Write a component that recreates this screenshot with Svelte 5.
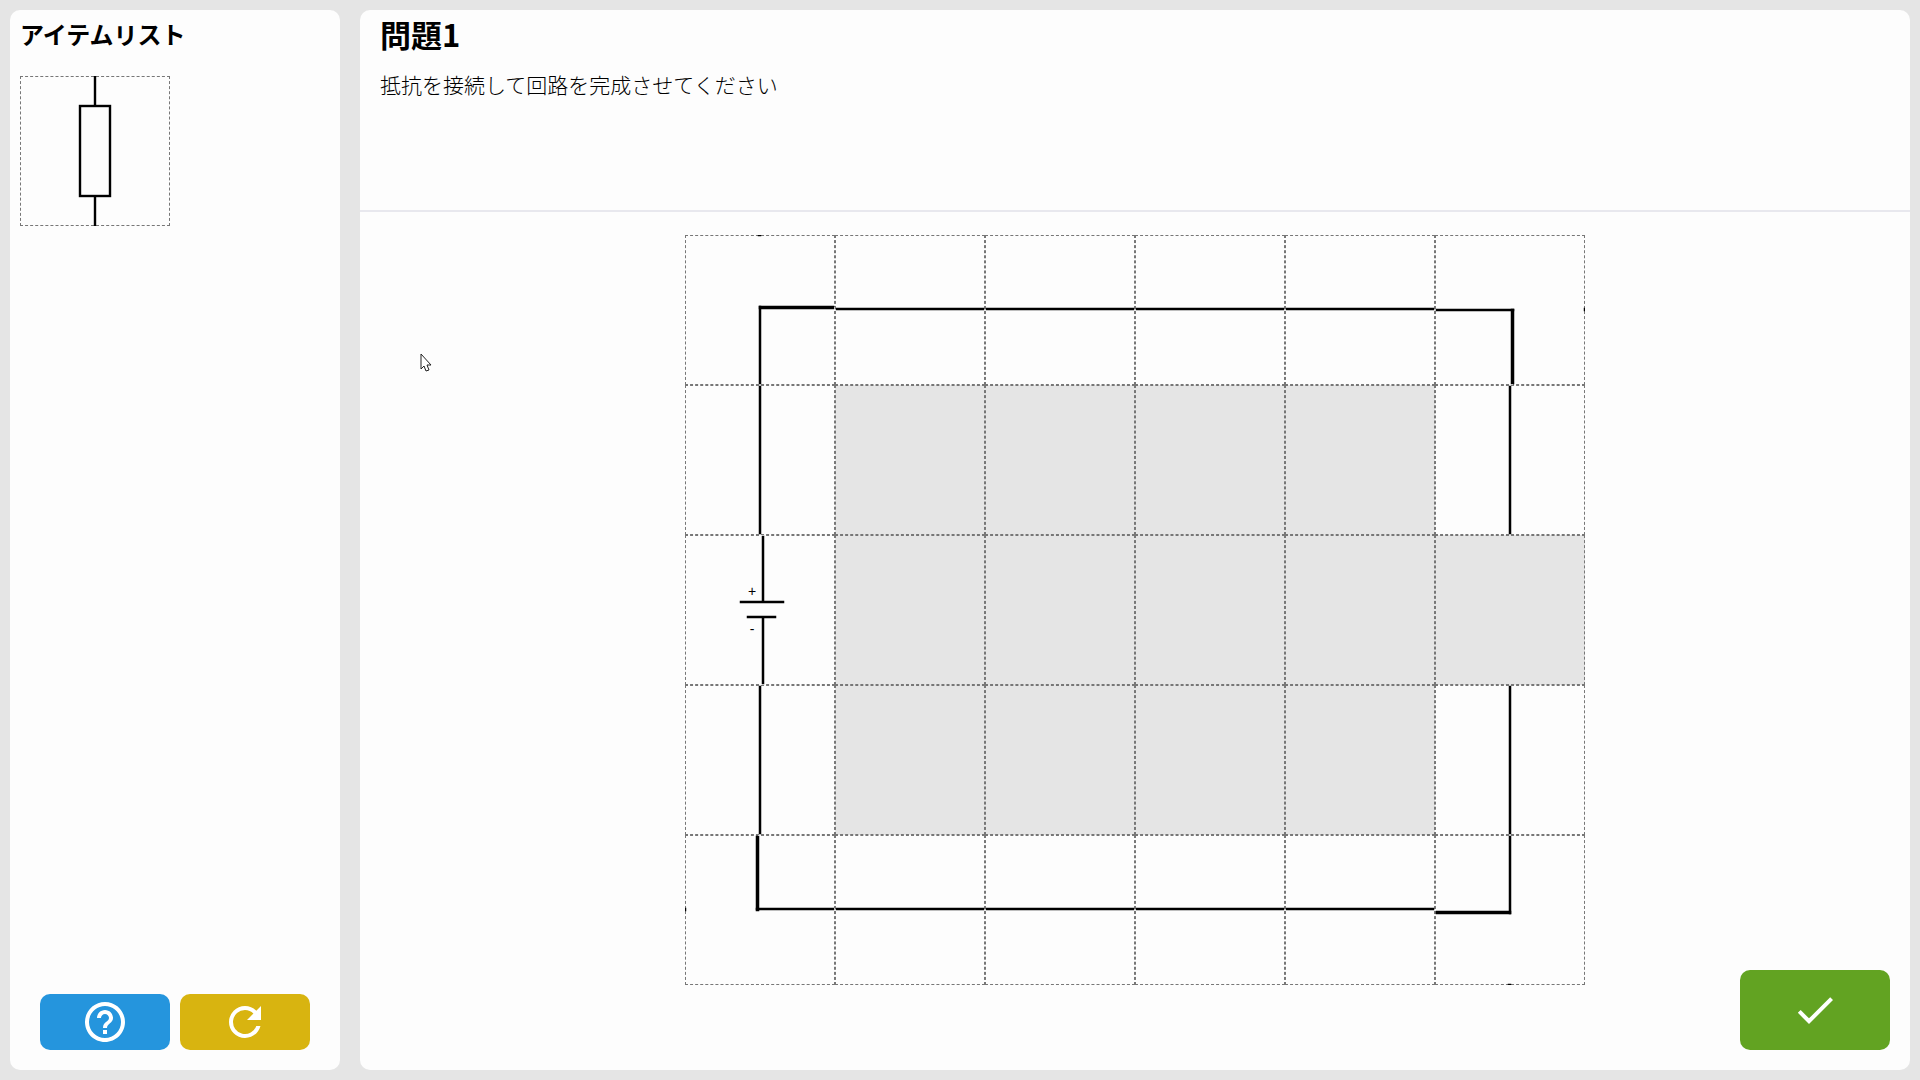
<script>
  // Wire strokes are [x, y, width, height] boxes inside a 150-unit cell.
  const parts = {
    tl: { wires: [[74, 71, 75, 3], [74, 71, 2, 78], [73, 0, 3, 1]], gaps: [[74, 149, 2, 1], [149, 72, 1, 2]] },
    top: { wires: [[1, 73, 148, 2]], gaps: [] },
    tr: { wires: [[1, 74, 78, 2], [76, 74, 3, 75], [149, 73, 1, 3]], gaps: [[0, 74, 1, 2], [75, 149, 3, 1]] },
    left: { wires: [[74, 1, 2, 148]], gaps: [[74, 0, 2, 1], [74, 149, 2, 1]] },
    right: { wires: [[74, 1, 2, 148]], gaps: [[74, 0, 2, 1]] },
    battery: {
      wires: [[77, 1, 2, 66], [55, 66, 44, 2], [62, 81, 29, 2], [77, 82, 2, 67]],
      gaps: [[76, 0, 3, 1], [76, 149, 3, 1]],
      poles: true
    },
    bl: { wires: [[71, 1, 3, 75], [71, 73, 78, 2], [0, 73, 1, 3]], gaps: [[73, 0, 3, 1], [149, 73, 1, 3]] },
    br: { wires: [[1, 76, 75, 3], [74, 1, 2, 78], [73, 149, 3, 1]], gaps: [[0, 74, 1, 2], [74, 0, 2, 1]] }
  };

  const board = [
    ['tl', 'top', 'top', 'top', 'top', 'tr'],
    ['left', 'open', 'open', 'open', 'open', 'right'],
    ['battery', 'open', 'open', 'open', 'open', 'open'],
    ['left', 'open', 'open', 'open', 'open', 'right'],
    ['bl', 'top', 'top', 'top', 'top', 'br']
  ].flat();
</script>

<div class="app">
  <aside class="panel sidebar">
    <h2>アイテムリスト</h2>
    <div class="cell item">
      <svg viewBox="0 0 150 150" role="img" aria-label="抵抗">
        <path d="M75 0V30M75 120V150" stroke="#000" stroke-width="2.4" />
        <rect x="60" y="30" width="30" height="90" fill="none" stroke="#000" stroke-width="2.4" />
      </svg>
    </div>
    <div class="tools">
      <button class="help" aria-label="ヘルプ">
        <svg class="icon" viewBox="0 0 24 24"><path d="M11 18h2v-2h-2v2zm1-16C6.48 2 2 6.48 2 12s4.48 10 10 10 10-4.48 10-10S17.52 2 12 2zm0 18c-4.41 0-8-3.59-8-8s3.59-8 8-8 8 3.59 8 8-3.59 8-8 8zm0-14c-2.21 0-4 1.79-4 4h2c0-1.1.9-2 2-2s2 .9 2 2c0 2-3 1.75-3 5h2c0-2.25 3-2.5 3-5 0-2.21-1.79-4-4-4z" /></svg>
      </button>
      <button class="reset" aria-label="リセット">
        <svg class="icon" viewBox="0 0 24 24"><path d="M17.65 6.35C16.2 4.9 14.21 4 12 4a8 8 0 1 0 0 16c3.73 0 6.84-2.55 7.73-6h-2.08A6 6 0 1 1 12 6c1.66 0 3.14.69 4.22 1.78L13 11h7V4z" /></svg>
      </button>
    </div>
  </aside>

  <main class="panel main">
    <header>
      <h1>問題1</h1>
      <p>抵抗を接続して回路を完成させてください</p>
    </header>
    <section class="work">
      <div class="board">
        {#each board as kind}
          <div class="cell" class:open={kind === 'open'}>
            {#if parts[kind]}
              <svg viewBox="0 0 150 150" aria-hidden="true">
                {#each parts[kind].gaps as [x, y, w, h]}
                  <rect {x} {y} width={w} height={h} fill="#fdfdfd" />
                {/each}
                {#each parts[kind].wires as [x, y, w, h]}
                  <rect class="wire" {x} {y} width={w} height={h} />
                {/each}
                {#if parts[kind].poles}
                  <text x="67" y="61">+</text>
                  <text x="67" y="99">-</text>
                {/if}
              </svg>
            {/if}
          </div>
        {/each}
      </div>
    </section>
    <footer>
      <button class="submit" aria-label="決定">
        <svg class="icon" viewBox="0 0 24 24"><path d="M9 16.17L4.83 12l-1.42 1.41L9 19 21 7l-1.41-1.41z" /></svg>
      </button>
    </footer>
  </main>

  <svg class="pointer" viewBox="0 0 13 20" aria-hidden="true">
    <path d="M1 1V16L4 13L6 18L9 17L7 12H11Z" fill="#fff" stroke="#222" />
  </svg>
</div>

<style>
  :global(body) {
    background: #e5e5e5;
  }
  .app {
    position: relative;
    box-sizing: border-box;
    min-height: 100vh;
    padding: 10px;
    display: flex;
    gap: 20px;
    color: #000;
    font-family: "Noto Sans CJK JP", sans-serif;
  }
  .panel {
    box-sizing: border-box;
    background: #fdfdfd;
    border-radius: 10px;
    display: flex;
    flex-direction: column;
  }
  .sidebar {
    flex: 0 0 330px;
    padding: 8px 10px 20px;
  }
  h1,
  h2,
  p {
    margin: 0;
  }
  h2 {
    font-size: 24px;
    line-height: 32px;
    margin-bottom: 26px;
  }
  .cell {
    position: relative;
    box-sizing: border-box;
    width: 150px;
    height: 150px;
    border: 1px dashed #777;
  }
  .cell svg {
    position: absolute;
    inset: -1px;
    width: 150px;
    height: 150px;
  }
  .cell text {
    font: 14px "Liberation Sans", sans-serif;
    text-anchor: middle;
  }
  .wire {
    fill: #000;
    stroke: #000;
    stroke-width: 0.5;
  }
  .open {
    background: #e5e5e5;
  }
  .tools {
    margin-top: auto;
    display: flex;
    justify-content: center;
    gap: 10px;
  }
  button {
    display: flex;
    align-items: center;
    justify-content: center;
    border: 0;
    border-radius: 10px;
    padding: 0;
    width: 130px;
    height: 56px;
  }
  .icon {
    width: 48px;
    height: 48px;
    fill: #fff;
  }
  .help {
    background: #2595dd;
  }
  .reset {
    background: #d8b410;
  }
  .submit {
    width: 150px;
    height: 80px;
    background: #62a322;
  }
  .main {
    flex: 1;
  }
  header {
    box-sizing: border-box;
    min-height: 202px;
    padding: 2px 20px 20px;
    border-bottom: 2px solid #e8e8ee;
  }
  h1 {
    font-size: 31px;
    line-height: 44px;
    margin-bottom: 12px;
  }
  p {
    font-size: 21px;
    line-height: 32px;
    font-weight: 300;
  }
  .work {
    flex: 1;
    padding-top: 23px;
    display: flex;
    justify-content: center;
    align-items: flex-start;
  }
  .board {
    display: grid;
    grid-template-columns: repeat(6, 150px);
  }
  footer {
    display: flex;
    justify-content: flex-end;
    margin-top: -80px;
    padding: 0 20px 20px;
  }
  .pointer {
    position: absolute;
    left: 420px;
    top: 353px;
    width: 13px;
    height: 20px;
    pointer-events: none;
  }
</style>
